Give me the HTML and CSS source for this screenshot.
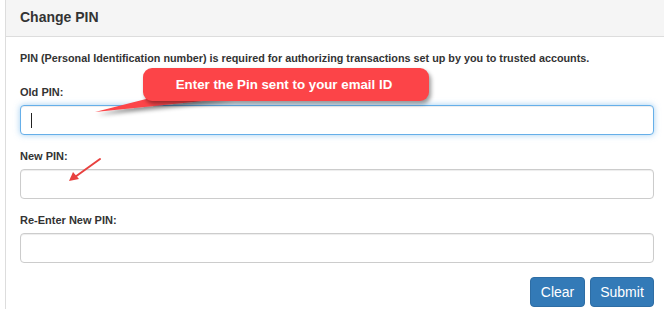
FILE: index.html
```html
<!DOCTYPE html>
<html>
<head>
<meta charset="utf-8">
<link rel="stylesheet" href="styles.css">
</head>
<body>
<div class="panel">
  <div class="panel-heading">Change PIN</div>
  <div class="panel-body">
    <p class="desc">PIN (Personal Identification number) is required for authorizing transactions set up by you to trusted accounts.</p>
    <div class="form-group">
      <label class="lbl">Old PIN:</label>
      <div class="field">
        <input class="input focus" type="password">
        <span class="caret"></span>
      </div>
    </div>
    <div class="form-group">
      <label class="lbl">New PIN:</label>
      <input class="input" type="password">
    </div>
    <div class="form-group">
      <label class="lbl">Re-Enter New PIN:</label>
      <input class="input" type="password">
    </div>
    <div class="actions">
      <button class="btn btn-clear">Clear</button>
      <button class="btn btn-submit">Submit</button>
    </div>
  </div>
</div>

<svg class="annot" width="664" height="309" viewBox="0 0 664 309">
  <defs>
    <filter id="sh" x="-20%" y="-50%" width="140%" height="200%">
      <feDropShadow dx="2" dy="3" stdDeviation="2" flood-color="#000" flood-opacity="0.45"/>
    </filter>
  </defs>
  <polygon points="158,96 95,112 232,98" fill="#fc4448" filter="url(#sh)"/>
  <line x1="100" y1="159" x2="75" y2="177" stroke="#e8413f" stroke-width="2" stroke-linecap="round"/>
  <polygon points="69,181 73,172 79,179" fill="#e8413f"/>
</svg>
<div class="callout">Enter the Pin sent to your email ID</div>
</body>
</html>
```

FILE: styles.css
```css
html, body {
  margin: 0;
  padding: 0;
  overflow: hidden;
  background: #fff;
}
body {
  font-family: "Liberation Sans", Arial, sans-serif;
  color: #333;
  width: 664px;
  height: 309px;
  position: relative;
}
.panel {
  box-sizing: border-box;
  margin-left: 5px;
  width: 664px;
  border-left: 1px solid #ddd;
  height: 309px;
}
.panel-heading {
  background: #f5f5f5;
  border-bottom: 1px solid #ddd;
  padding: 9px 14px 11px;
  font-size: 14px;
  font-weight: bold;
  line-height: 16px;
  height: 16px;
}
.panel-body {
  padding: 14px 15px 0 14px;
}
.desc {
  margin: 0 0 20px;
  font-size: 10.8px;
  font-weight: bold;
  line-height: 14px;
  white-space: nowrap;
}
.form-group {
  margin-bottom: 14px;
}
.lbl {
  display: block;
  font-size: 11px;
  font-weight: bold;
  line-height: 14px;
  margin-bottom: 6px;
}
.field {
  position: relative;
}
.input {
  display: block;
  box-sizing: border-box;
  width: 100%;
  height: 30px;
  margin: 0;
  padding: 5px 10px;
  border: 1px solid #ccc;
  border-radius: 4px;
  background: #fff;
  box-shadow: inset 0 1px 1px rgba(0,0,0,.075);
  outline: none;
  font-size: 12px;
}
.input.focus {
  border-color: #66afe9;
  box-shadow: inset 0 1px 1px rgba(0,0,0,.075), 0 0 6px rgba(102,175,233,.6);
}
.caret {
  position: absolute;
  left: 11px;
  top: 8px;
  width: 1px;
  height: 15px;
  background: #222;
}
.actions {
  display: flex;
  justify-content: flex-end;
  gap: 5px;
}
.btn {
  box-sizing: border-box;
  height: 30px;
  padding: 0 10px;
  border: 1px solid #2e6da4;
  border-radius: 4px;
  background: #337ab7;
  color: #fff;
  font-family: "Liberation Sans", Arial, sans-serif;
  font-size: 14px;
  line-height: 28px;
}
.btn-clear {
  width: 55px;
  padding: 0;
}
.btn-submit {
  width: 64px;
  padding: 0;
}
.annot {
  position: absolute;
  left: 0;
  top: 0;
  pointer-events: none;
}
.callout {
  position: absolute;
  left: 143px;
  top: 68px;
  width: 286px;
  height: 33px;
  box-sizing: border-box;
  background: #fc4448;
  border-radius: 9px;
  box-shadow: 2px 3px 4px rgba(0,0,0,.4);
  color: #fff;
  font-weight: bold;
  font-size: 13.3px;
  line-height: 33px;
  text-align: center;
  padding-right: 4px;
}
```
